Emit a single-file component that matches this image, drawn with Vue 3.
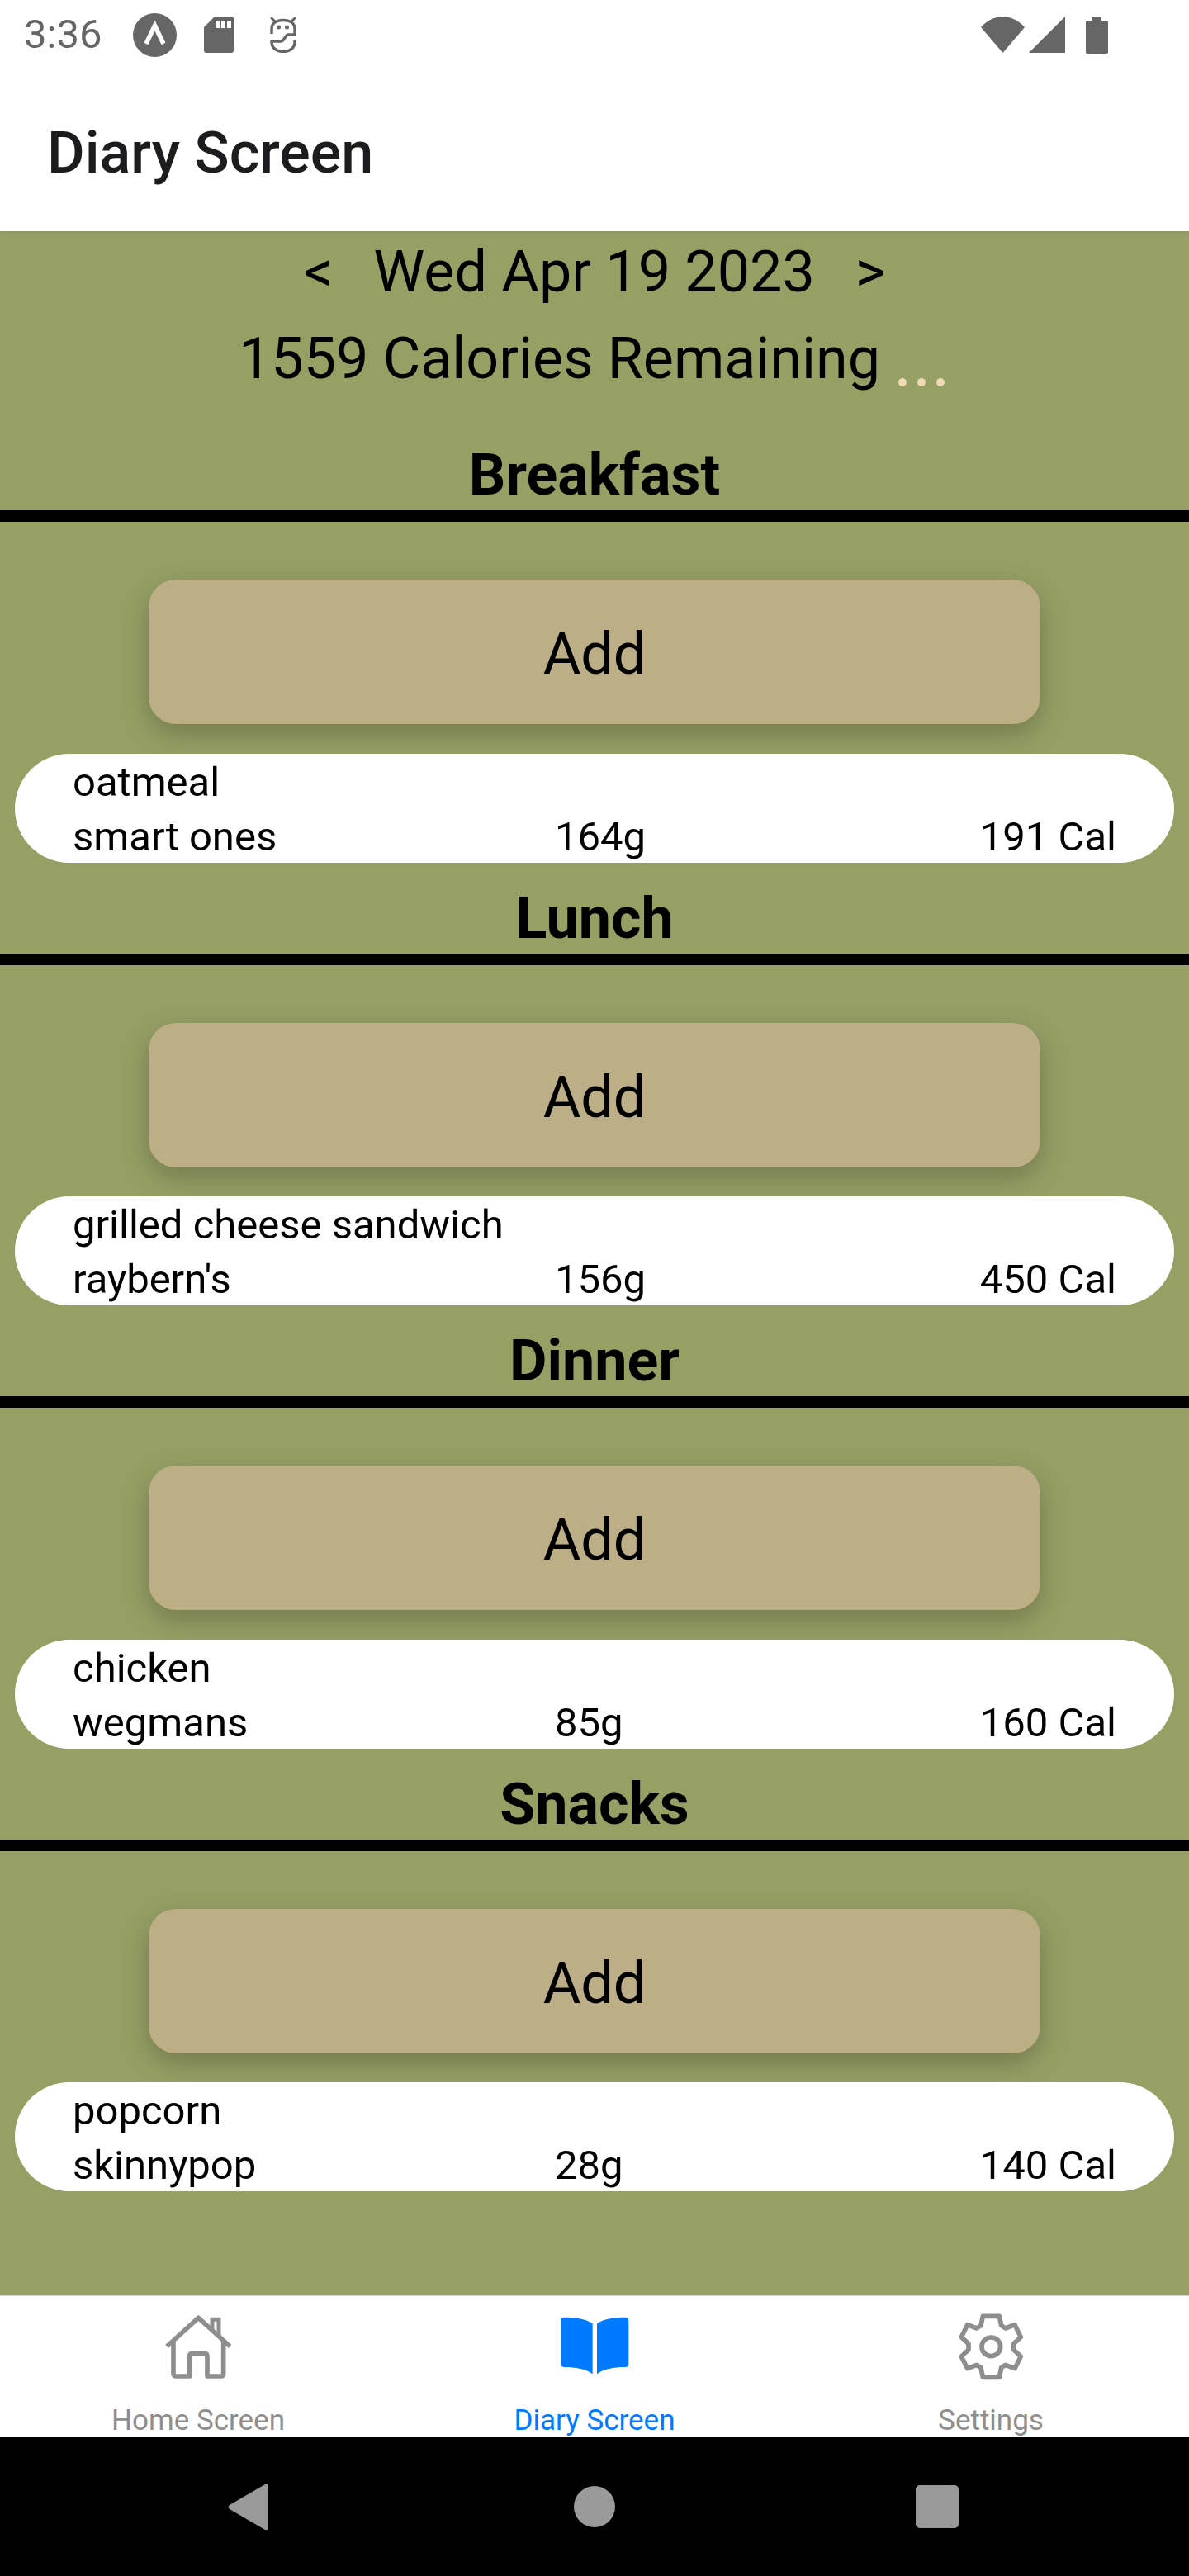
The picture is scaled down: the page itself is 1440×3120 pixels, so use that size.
<script setup>
const sections = [
  { title: 'Breakfast', name: 'oatmeal', brand: 'smart ones', grams: '164g', cal: '191 Cal' },
  { title: 'Lunch', name: 'grilled cheese sandwich', brand: "raybern's", grams: '156g', cal: '450 Cal' },
  { title: 'Dinner', name: 'chicken', brand: 'wegmans', grams: '85g', cal: '160 Cal' },
  { title: 'Snacks', name: 'popcorn', brand: 'skinnypop', grams: '28g', cal: '140 Cal' }
]
</script>

<template>
  <div class="screen">
    <header class="header">
      <div class="status">
        <span class="clock">3:36</span>
        <svg class="ic-a" viewBox="0 0 53 53"><circle cx="26.5" cy="26.5" r="26.5" fill="#666"/><path d="M16 37 L26.5 15 L37 37" fill="none" stroke="#fff" stroke-width="5.5"/></svg>
        <svg class="ic-sd" viewBox="0 0 36 44"><path d="M13 0H33a3 3 0 0 1 3 3V41a3 3 0 0 1-3 3H3a3 3 0 0 1-3-3V13Z" fill="#666"/><path d="M14 5h5v9h-5zM21 5h5v9h-5zM28 5h5v9h-5z" fill="#fff"/></svg>
        <svg class="ic-bot" viewBox="0 0 32 44"><path d="M2 2 L6 6 M30 2 L26 6" stroke="#666" stroke-width="3" stroke-linecap="round"/><path d="M2 21V15C2 8 8 4.500 16 4.500S30 8 30 15V22H22C18 22 18 30 13 30H2V31C2 38 8 42.500 16 42.500S30 38 30 31V29" fill="none" stroke="#666" stroke-width="3.400"/><circle cx="10.500" cy="13" r="2.500" fill="#666"/><circle cx="20.500" cy="13" r="2.500" fill="#666"/></svg>
        <span class="spacer"></span>
        <svg class="ic-wifi" viewBox="0 0 53 44"><path d="M0 13 C15 -4 38 -4 53 13 L26.500 44Z" fill="#666"/></svg>
        <svg class="ic-signal" viewBox="0 0 44 44"><path d="M44 0V44H0Z" fill="#666"/></svg>
        <svg class="ic-batt" viewBox="0 0 27 45"><path d="M8 0H19V5H25a2 2 0 0 1 2 2V43a2 2 0 0 1-2 2H2a2 2 0 0 1-2-2V7a2 2 0 0 1 2-2H8Z" fill="#666"/></svg>
      </div>
      <div class="title">Diary Screen</div>
    </header>

    <main class="diary">
      <div class="date-row">
        <span>&lt;</span>
        <span>Wed Apr 19 2023</span>
        <span>&gt;</span>
      </div>
      <div class="remaining">
        <span>1559 Calories Remaining</span>
        <span class="dots"><i></i><i></i><i></i></span>
      </div>

      <section v-for="s in sections" :key="s.title" class="meal">
        <h2 class="meal-title">{{ s.title }}</h2>
        <div class="add-wrap">
          <div class="add">Add</div>
        </div>
        <div class="food">
          <div class="food-name">{{ s.name }}</div>
          <div class="food-line">
            <span>{{ s.brand }}</span>
            <span>{{ s.grams }}</span>
            <span>{{ s.cal }}</span>
          </div>
        </div>
      </section>
    </main>

    <nav class="tabs">
      <div class="tab">
        <svg class="tab-ic" viewBox="590 125 260 250" fill="none" stroke="#8e8e8f" stroke-width="17">
          <path d="M605 248 L720 144 L835 248" stroke-linecap="butt" stroke-linejoin="round"/>
          <path d="M770 190 V150 H794 V215" stroke-width="15"/>
          <path d="M629 225 V346 Q629 356 639 356 H688 V284 Q688 273 699 273 H741 Q752 273 752 284 V356 H801 Q811 356 811 346 V225" stroke-linejoin="round"/>
        </svg>
        <span class="tab-label">Home Screen</span>
      </div>
      <div class="tab active">
        <svg class="tab-ic" viewBox="590 125 260 250">
          <path d="M712 165 C690 148 650 142 610 142 Q597 142 597 155 V310 Q597 323 610 323 C650 323 690 330 712 348Z" fill="#007aff"/>
          <path d="M728 165 C750 148 790 142 830 142 Q843 142 843 155 V310 Q843 323 830 323 C790 323 750 330 728 348Z" fill="#007aff"/>
        </svg>
        <span class="tab-label">Diary Screen</span>
      </div>
      <div class="tab">
        <svg class="tab-ic" viewBox="590 125 260 250" fill="none" stroke="#8e8e8f" stroke-width="17" stroke-linejoin="round">
          <path d="M690 138H750L757 172 772 182 806 169 828 214 802 238V260L828 284 806 328 772 315 757 325 750 360H690L683 325 668 315 634 328 612 284 638 260V238L612 214 634 169 668 182 683 172Z"/>
          <circle cx="720" cy="249" r="34"/>
        </svg>
        <span class="tab-label">Settings</span>
      </div>
    </nav>

    <div class="sysnav">
      <svg class="sys-back" viewBox="0 0 49 57"><path d="M45 1 Q49 0 49 4V53Q49 57 45 56L2 31Q-1 28.500 2 26Z" fill="#999"/></svg>
      <span class="sys-home"></span>
      <span class="sys-recent"></span>
    </div>
  </div>
</template>

<style>
html, body { margin: 0; background: #fff; }
</style>

<style scoped>
.screen {
  width: 1440px;
  height: 3120px;
  display: flex;
  flex-direction: column;
  overflow: hidden;
  font-family: Roboto, "Liberation Sans", sans-serif;
  color: #000;
}
.header {
  height: 280px;
  flex: none;
  background: #fff;
  position: relative;
  z-index: 1;
  box-shadow: 0 1px 5px rgba(0, 0, 0, 0.08);
}
.status {
  height: 84px;
  display: flex;
  align-items: center;
  color: #666;
  padding: 0 98px 0 29px;
}
.clock { font-size: 49px; line-height: 84px; color: #666; width: 132px; }
.status svg { flex: none; }
.ic-a { width: 53px; height: 53px; }
.ic-sd { width: 36px; height: 44px; margin-left: 33px; }
.ic-bot { width: 32px; height: 44px; margin-left: 44px; }
.spacer { flex: 1; }
.ic-wifi { width: 53px; height: 44px; }
.ic-signal { width: 44px; height: 44px; margin-left: 5px; }
.ic-batt { width: 27px; height: 45px; margin-left: 25px; }
.title {
  padding: 60px 0 0 57px;
  font-size: 70px;
  line-height: 82px;
  font-weight: 500;
  color: #1c1c1e;
}
.diary {
  flex: 1;
  background: #96a065;
  display: flex;
  flex-direction: column;
}
.date-row {
  display: flex;
  justify-content: center;
  gap: 49px;
  padding-top: 8px;
  font-size: 70px;
  line-height: 82px;
}
.remaining {
  display: flex;
  justify-content: center;
  align-items: flex-start;
  margin: 23px 0 33.1px;
  padding-right: 7px;
  font-size: 70px;
  line-height: 82px;
}
.dots {
  display: flex;
  gap: 13px;
  margin: 65px 0 0 22px;
}
.dots i {
  display: block;
  width: 10px;
  height: 10px;
  border-radius: 50%;
  background: #f0d9b5;
}
.meal-title {
  margin: 0;
  height: 110.1px;
  box-sizing: border-box;
  display: flex;
  align-items: flex-end;
  justify-content: center;
  font-size: 70px;
  line-height: 82px;
  font-weight: 700;
  padding-bottom: 2px;
}
.add-wrap {
  border-top: 14px solid #000;
  padding: 70px 180px 35.4px;
}
.add {
  height: 175px;
  padding-top: 5px;
  box-sizing: border-box;
  background: #bcae87;
  border-radius: 33px;
  display: flex;
  align-items: center;
  justify-content: center;
  font-size: 70px;
  box-shadow: 0 12px 34px rgba(0, 0, 0, 0.24);
}
.food {
  position: relative;
  margin: 0 18px;
  height: 132px;
  box-sizing: border-box;
  background: #fff;
  border-radius: 66px;
  padding: 2px 70px 0;
  font-size: 49px;
  line-height: 66px;
}
.food-line {
  display: grid;
  grid-template-columns: 584px 1fr auto;
}
.tabs {
  flex: none;
  height: 172px;
  box-sizing: border-box;
  background: #fff;
  border-top: 1px solid #d8d8d8;
  display: grid;
  grid-template-columns: repeat(3, 1fr);
  color: #8e8e8f;
}
.tab {
  display: flex;
  flex-direction: column;
  align-items: center;
  padding-top: 20px;
}
.tab-ic { width: 86.67px; height: 83.33px; flex: none; }
.tab-label {
  font-size: 35px;
  line-height: 42px;
  margin-top: 27px;
  white-space: nowrap;
}
.active { color: #007aff; }
.sysnav {
  flex: none;
  height: 168px;
  background: #000;
  position: relative;
}
.sys-back {
  position: absolute;
  left: 276px;
  top: 56px;
  width: 49px;
  height: 57px;
}
.sys-home {
  position: absolute;
  left: 695px;
  top: 59px;
  width: 50px;
  height: 50px;
  border-radius: 50%;
  background: #999;
}
.sys-recent {
  position: absolute;
  left: 1109px;
  top: 58px;
  width: 52px;
  height: 52px;
  border-radius: 5px;
  background: #999;
}
</style>
